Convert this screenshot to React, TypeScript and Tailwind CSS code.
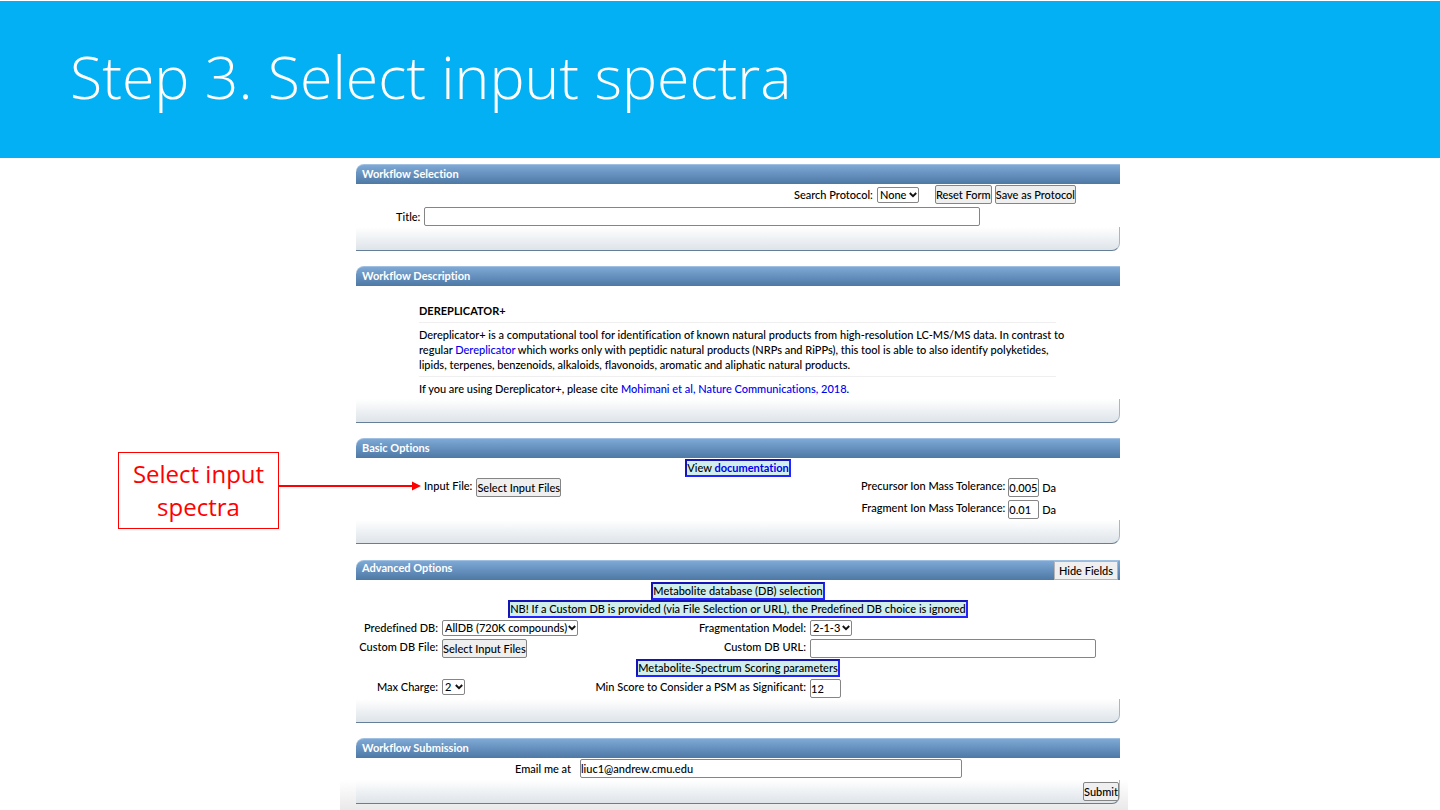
import type { ReactNode } from 'react';

type PanelProps = {
  title: string;
  children: ReactNode;
  action?: ReactNode;
  footer?: ReactNode;
  raisedTitle?: boolean;
};

function Panel({ title, children, action, footer, raisedTitle }: PanelProps) {
  return (
    <section>
      <header className="flex h-5 items-stretch justify-between rounded-tl-lg border-t border-[#9fc0e0] bg-linear-to-b from-[#7ea9d6] to-[#4e79a5] pl-[6px] text-white">
        <h2 className={raisedTitle ? 'font-bold leading-[14px]' : 'font-bold leading-[18px]'}>{title}</h2>
        {action}
      </header>
      {children}
      <div className="flex h-6 justify-end rounded-br-lg border-r border-b border-r-[#a9b7c5] border-b-[#667f98] bg-linear-to-b from-white to-[#dee4e9]">
        {footer}
      </div>
    </section>
  );
}

function Select({ id, value, className }: { id: string; value: string; className: string }) {
  return (
    <span className={`relative inline-flex h-4 ${className}`}>
      <select
        id={id}
        defaultValue={value}
        className="h-4 w-full appearance-none rounded-xs border border-[#858585] bg-white pl-[2px] leading-[14px] text-black"
      >
        <option>{value}</option>
      </select>
      <svg
        viewBox="0 0 8 6"
        className="pointer-events-none absolute top-[5px] right-[2px] h-[6px] w-2"
        fill="none"
        stroke="#111"
        strokeWidth="1.9"
      >
        <path d="M0.8 1 4 4.2 7.2 1" />
      </svg>
    </span>
  );
}

function Button({ children }: { children: ReactNode }) {
  return (
    <button
      type="button"
      className="h-[19px] shrink-0 rounded-xs border border-[#858585] bg-[#efefef] leading-[17px] whitespace-nowrap"
    >
      {children}
    </button>
  );
}

function TextField({ id, value, className }: { id: string; value?: string; className: string }) {
  return (
    <input
      id={id}
      type="text"
      defaultValue={value}
      className={`h-[19px] rounded-xs border border-[#858585] bg-white leading-[17px] ${className}`}
    />
  );
}

function Note({ children }: { children: ReactNode }) {
  return (
    <p className="mx-auto w-fit border-2 border-t-[#1414b8] border-r-[#2424ff] border-b-[#2424ff] border-l-[#1414b8] bg-[#d0eeec] leading-[14px] whitespace-nowrap">
      {children}
    </p>
  );
}

function Label({ htmlFor, children }: { htmlFor?: string; children: ReactNode }) {
  return (
    <label htmlFor={htmlFor} className="text-right leading-4 whitespace-nowrap">
      {children}
    </label>
  );
}

function Callout() {
  return (
    <div className="absolute top-[14px] -left-[238px] flex items-start">
      <p className="w-[161px] border border-[#ff0000] bg-white pt-1 pb-[5px] text-center font-['Open_Sans',sans-serif] text-2xl leading-[33px] font-medium whitespace-nowrap text-[#ff0000]">
        Select input
        <br />
        spectra
      </p>
      <svg viewBox="0 0 142 10" className="mt-[29px] h-[10px] w-[142px]">
        <path d="M0 5h135" stroke="#ff0000" strokeWidth="2" />
        <path d="M133 0.5v9l9-4.5z" fill="#ff0000" />
      </svg>
    </div>
  );
}

export default function App() {
  return (
    <div className="min-h-screen bg-white pt-px font-[Lato,sans-serif] text-[11px] font-medium text-black [font-variant-ligatures:none]">
      <header className="flex h-[157px] items-center bg-[#02b0f3] px-[70px] pb-2">
        <h1 className="font-['Open_Sans',sans-serif] text-[59px] leading-[80px] font-light whitespace-nowrap text-white">
          Step 3. Select input spectra
        </h1>
      </header>

      <div className="grid grid-cols-[minmax(0,340fr)_minmax(0,788fr)_minmax(0,312fr)]">
        <form className="col-start-2 bg-[linear-gradient(to_top,#e9e9e9,#ffffff_30px)] pt-[6px] pr-2 pb-[6px] pl-4">
          <div className="flex flex-col gap-[15px]">
            <Panel title="Workflow Selection">
              <div className="flex flex-col gap-[3px] pt-px pb-px">
                <div className="flex items-center justify-end pr-11">
                  <Label htmlFor="protocol">Search Protocol:</Label>
                  <Select id="protocol" value="None" className="mr-4 ml-1 w-[42px]" />
                  <div className="flex gap-[3px]">
                    <Button>Reset Form</Button>
                    <Button>Save as Protocol</Button>
                  </div>
                </div>
                <div className="flex items-center gap-1 pr-[140px] pl-10">
                  <Label htmlFor="title">Title:</Label>
                  <TextField id="title" className="min-w-0 flex-1" />
                </div>
              </div>
            </Panel>

            <Panel title="Workflow Description">
              <div className="pt-[17px] pr-16 pb-[3px] pl-[63px] leading-[15px]">
                <h3 className="font-bold">DEREPLICATOR+</h3>
                <hr className="my-1 border-[#efefef]" />
                <p className="whitespace-nowrap">
                  Dereplicator+ is a computational tool for identification of known natural products from high-resolution
                  LC-MS/MS data. In contrast to
                  <br />
                  regular{' '}
                  <a href="#dereplicator" className="text-[#0000ee]">
                    Dereplicator
                  </a>{' '}
                  which works only with peptidic natural products (NRPs and RiPPs), this tool is able to also identify
                  polyketides,
                  <br />
                  lipids, terpenes, benzenoids, alkaloids, flavonoids, aromatic and aliphatic natural products.
                </p>
                <hr className="my-1 border-[#efefef]" />
                <p>
                  If you are using Dereplicator+, please cite{' '}
                  <a href="#citation" className="text-[#0000ee]">
                    Mohimani et al, Nature Communications, 2018
                  </a>
                  .
                </p>
              </div>
            </Panel>

            <div className="relative pb-px">
              <Panel title="Basic Options">
                <div className="pt-px pb-px">
                  <Note>
                    View{' '}
                    <a href="#documentation" className="font-bold text-[#0000ee]">
                      documentation
                    </a>
                  </Note>
                  <div className="flex justify-between pt-px pr-16 pl-[68px]">
                    <div className="flex items-start gap-1">
                      <Label>Input File:</Label>
                      <Button>Select Input Files</Button>
                    </div>
                    <div className="grid grid-cols-[auto_auto_auto] gap-x-[3px] gap-y-[3px]">
                      <Label htmlFor="precursor">Precursor Ion Mass Tolerance:</Label>
                      <TextField id="precursor" value="0.005" className="w-[31px]" />
                      <span className="leading-[19px]">Da</span>
                      <Label htmlFor="fragment">Fragment Ion Mass Tolerance:</Label>
                      <TextField id="fragment" value="0.01" className="w-[31px]" />
                      <span className="leading-[19px]">Da</span>
                    </div>
                  </div>
                </div>
              </Panel>
              <Callout />
            </div>

            <Panel
              title="Advanced Options"
              raisedTitle
              action={
                <button
                  type="button"
                  className="mr-[2px] border border-[#b5b5b5] bg-[#efefef] px-1 leading-[17px] text-black"
                >
                  Hide Fields
                </button>
              }
            >
              <div className="pt-[2px] pb-px">
                <Note>Metabolite database (DB) selection</Note>
                <Note>NB! If a Custom DB is provided (via File Selection or URL), the Predefined DB choice is ignored</Note>
                <div className="grid grid-cols-[82px_276fr_84px_310fr] items-start gap-x-1 gap-y-[3px] pt-[2px] pb-px">
                  <Label htmlFor="database">Predefined DB:</Label>
                  <Select id="database" value="AllDB (720K compounds)" className="w-[136px]" />
                  <div className="flex justify-end">
                    <Label htmlFor="model">Fragmentation Model:</Label>
                  </div>
                  <Select id="model" value="2-1-3" className="w-[42px]" />
                  <Label>Custom DB File:</Label>
                  <div className="flex">
                    <Button>Select Input Files</Button>
                  </div>
                  <Label htmlFor="url">Custom DB URL:</Label>
                  <div className="flex pr-6">
                    <TextField id="url" className="min-w-0 flex-1" />
                  </div>
                </div>
                <Note>Metabolite-Spectrum Scoring parameters</Note>
                <div className="grid grid-cols-[82px_276fr_84px_310fr] items-start gap-x-1 pt-[2px]">
                  <Label htmlFor="charge">Max Charge:</Label>
                  <Select id="charge" value="2" className="w-[23px]" />
                  <div className="flex justify-end">
                    <Label htmlFor="score">Min Score to Consider a PSM as Significant:</Label>
                  </div>
                  <TextField id="score" value="12" className="w-[31px]" />
                </div>
              </div>
            </Panel>

            <Panel
              title="Workflow Submission"
              footer={
                <div className="pt-[2px]">
                  <Button>Submit</Button>
                </div>
              }
            >
              <div className="flex items-center gap-[9px] pt-px pr-[158px] pb-[2px] pl-[159px]">
                <Label htmlFor="email">Email me at</Label>
                <TextField id="email" value="liuc1@andrew.cmu.edu" className="min-w-0 flex-1" />
              </div>
            </Panel>
          </div>
        </form>
      </div>
    </div>
  );
}
